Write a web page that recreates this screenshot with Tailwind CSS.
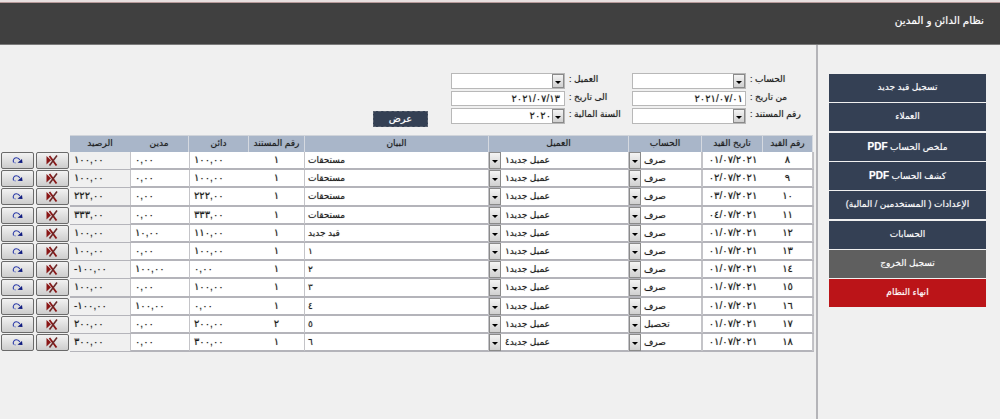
<!DOCTYPE html>
<html lang="ar">
<head>
  <meta charset="UTF-8">
  <title>نظام الدائن و المدين</title>
  <script src="https://cdn.jsdelivr.net/npm/@tailwindcss/browser@4"></script>
</head>
<body class="bg-[#f0f0f0] font-['Liberation_Sans','DejaVu_Sans',sans-serif] text-[9px] text-[#1a1a1a] [text-shadow:0_0_1px_rgba(0,0,0,0.4)]">
  <div class="h-[419px] w-[1000px] overflow-hidden flex flex-col">

    <!-- Header -->
    <div class="h-[3px] bg-[#e8e0e0] border-b border-[#b79a9a]"></div>
    <div class="h-[42px] bg-[#404040] border-b border-[#7a7a7a] flex justify-end pt-[10px] pr-[16px]">
      <span dir="rtl" class="text-white text-[10.5px] leading-[14px] [text-shadow:0_0_1px_rgba(255,255,255,0.5)]">نظام الدائن و المدين</span>
    </div>

    <div class="flex flex-1">
      <!-- Main -->
      <div class="w-[818px] border-r-2 border-[#b4b4b8] shrink-0">

        <!-- Filters -->
        <div class="mt-[28px] grid grid-cols-[373px_55px_23px_114px_67px_114px_70px] grid-rows-[17.5px_17.5px_17.5px] items-start">
          <div></div><div></div><div></div>
          <div class="h-[16px] bg-white border border-[#b8b8b8] flex"><span class="flex-1"></span><span class="select-btn"></span></div>
          <label dir="rtl" class="text-left pl-[4px] leading-[12px]">العميل :</label>
          <div class="h-[16px] bg-white border border-[#b8b8b8] flex"><span class="flex-1"></span><span class="select-btn"></span></div>
          <label dir="rtl" class="text-left pl-[4px] leading-[12px]">الحساب :</label>

          <div></div><div></div><div></div>
          <div dir="ltr" class="h-[15px] bg-white border border-[#b8b8b8] text-right text-[10px] pr-[4px] leading-[13px] tracking-[0.6px]">٢٠٢١/٠٧/١٣</div>
          <label dir="rtl" class="text-left pl-[4px] leading-[12px]">الى تاريخ :</label>
          <div dir="ltr" class="h-[15px] bg-white border border-[#b8b8b8] text-right text-[10px] pr-[2px] leading-[13px] tracking-[0.6px]">٢٠٢١/٠٧/٠١</div>
          <label dir="rtl" class="text-left pl-[4px] leading-[12px]">من تاريخ :</label>

          <div></div>
          <button class="h-[16px] mt-[2.5px] bg-[#344054] border border-dashed border-[#5a6270] text-white text-[10px] leading-[13px] [text-shadow:0_0_1px_rgba(255,255,255,0.5)]">عرض</button>
          <div></div>
          <div class="h-[16px] bg-white border border-[#b8b8b8] flex"><span class="flex-1 text-right text-[10px] pr-[1px] leading-[14px] tracking-[0.6px]">٢٠٢٠</span><span class="select-btn"></span></div>
          <label dir="rtl" class="text-left pl-[4px] leading-[12px]">السنة المالية :</label>
          <div class="h-[16px] bg-white border border-[#b8b8b8] flex"><span class="flex-1"></span><span class="select-btn"></span></div>
          <label dir="rtl" class="text-left pl-[4px] leading-[12px]">رقم المستند :</label>
        </div>

        <!-- Table -->
        <div class="mt-[9.5px] w-[813px]">
          <div dir="rtl" class="grid grid-cols-[50px_61px_73px_140px_184px_56px_60px_59px_60px] h-[17px] ml-[70px] bg-[#a9b6c9] border-t border-[#d0d4da] text-center leading-[15px] divide-x divide-x-reverse divide-[#d5d9e0]">
            <div>رقم القيد</div>
            <div>تاريخ القيد</div>
            <div>الحساب</div>
            <div>العميل</div>
            <div>البيان</div>
            <div>رقم المستند</div>
            <div>دائن</div>
            <div>مدين</div>
            <div>الرصيد</div>
          </div>
          <div id="rows"></div>
        </div>
      </div>

      <!-- Sidebar -->
      <div class="pl-[11px] pt-[29px] flex flex-col gap-[1.33px] text-white text-center leading-[27px] [text-shadow:0_0_1px_rgba(255,255,255,0.5)]" dir="rtl">
        <a class="block w-[157px] h-[28px] bg-[#344054]">تسجيل قيد جديد</a>
        <a class="block w-[157px] h-[28px] bg-[#344054]">العملاء</a>
        <a class="block w-[157px] h-[28px] bg-[#344054]">ملخص الحساب <span class="font-bold text-[10px]">PDF</span></a>
        <a class="block w-[157px] h-[28px] bg-[#344054]">كشف الحساب <span class="font-bold text-[10px]">PDF</span></a>
        <a class="block w-[157px] h-[28px] bg-[#344054]">الإعدادات ( المستخدمين / المالية)</a>
        <a class="block w-[157px] h-[28px] bg-[#344054]">الحسابات</a>
        <a class="block w-[157px] h-[28px] bg-[#5f5f5f]">تسجيل الخروج</a>
        <a class="block w-[157px] h-[28px] bg-[#bb1418]">انهاء النظام</a>
      </div>
    </div>
  </div>

  <script>
    const selectBtn = `<span class="w-[12px] shrink-0 border border-[#8a8a8a] bg-gradient-to-b from-[#f4f4f4] to-[#d0d0d0] flex items-center justify-center"><span class="w-0 h-0 mt-[2px] border-x-[3px] border-x-transparent border-t-[3px] border-t-black"></span></span>`;

    // Quickly fill the filter dropdown buttons
    document.querySelectorAll(".select-btn").forEach(el => { el.outerHTML = selectBtn; });

    const rows = [
      ["٨", "٠١/٠٧/٢٠٢١", "صرف", "عميل جديد١", "مستحقات", "١", "١٠٠,٠٠", "٠,٠٠", "١٠٠,٠٠"],
      ["٩", "٠٢/٠٧/٢٠٢١", "صرف", "عميل جديد١", "مستحقات", "١", "١٠٠,٠٠", "٠,٠٠", "١٠٠,٠٠"],
      ["١٠", "٠٣/٠٧/٢٠٢١", "صرف", "عميل جديد١", "مستحقات", "١", "٢٢٢,٠٠", "٠,٠٠", "٢٢٢,٠٠"],
      ["١١", "٠٤/٠٧/٢٠٢١", "صرف", "عميل جديد١", "مستحقات", "١", "٣٣٣,٠٠", "٠,٠٠", "٣٣٣,٠٠"],
      ["١٢", "٠١/٠٧/٢٠٢١", "صرف", "عميل جديد١", "قيد جديد", "١", "١١٠,٠٠", "١٠,٠٠", "١٠٠,٠٠"],
      ["١٣", "٠١/٠٧/٢٠٢١", "صرف", "عميل جديد١", "١", "١", "١٠٠,٠٠", "٠,٠٠", "١٠٠,٠٠"],
      ["١٤", "٠١/٠٧/٢٠٢١", "صرف", "عميل جديد١", "٢", "١", "٠,٠٠", "١٠٠,٠٠", "-١٠٠,٠٠"],
      ["١٥", "٠١/٠٧/٢٠٢١", "صرف", "عميل جديد١", "٣", "١", "١٠٠,٠٠", "٠,٠٠", "١٠٠,٠٠"],
      ["١٦", "٠١/٠٧/٢٠٢١", "صرف", "عميل جديد١", "٤", "١", "٠,٠٠", "١٠٠,٠٠", "-١٠٠,٠٠"],
      ["١٧", "٠١/٠٧/٢٠٢١", "تحصيل", "عميل جديد١", "٥", "٢", "٢٠٠,٠٠", "٠,٠٠", "٢٠٠,٠٠"],
      ["١٨", "٠١/٠٧/٢٠٢١", "صرف", "عميل جديد٤", "٦", "١", "٣٠٠,٠٠", "٠,٠٠", "٣٠٠,٠٠"],
    ];

    const redoIcon = `<svg width="11" height="7" viewBox="0 0 11 7" fill="none"><path d="M1.5 5.5 C0.5 2.5 2.5 0.8 4.5 0.8 C6 0.8 7.2 1.5 7.8 3" stroke="#2a3aa8" stroke-width="1.1"/><path d="M5.5 5.8 L10.5 6 L10 2 Z" fill="#101c80"/><path d="M1.5 5.5 L4 6" stroke="#7a86c9" stroke-width="0.9"/></svg>`;
    const deleteIcon = `<svg width="12" height="11" viewBox="0 0 12 11" fill="none"><path d="M0.5 1 L5 5.2 L0.5 9.5 Z" fill="#8a1616"/><path d="M3.5 1 L10.5 10.5" stroke="#8a1616" stroke-width="1.8"/><path d="M11 0.5 L3.5 10.5" stroke="#6a2a2a" stroke-width="1.6"/></svg>`;
    const actionBtn = icon => `<button class="w-[34px] h-[17px] mr-[1.5px] rounded-[2px] border border-[#6a6a6a] bg-gradient-to-b from-[#f2f2f2] to-[#cdcdcd] flex items-center justify-center">${icon}</button>`;

    document.getElementById("rows").innerHTML = rows.map(r => `
      <div class="flex h-[18.2px]">
        <div class="w-[70px] pl-[1px] flex items-start shrink-0">${actionBtn(redoIcon)}${actionBtn(deleteIcon)}</div>
        <div dir="rtl" class="flex-1 grid grid-cols-[50px_61px_73px_140px_184px_56px_60px_59px_60px] bg-white border-b-2 border-[#b4b4ba] border-r border-r-[#c0c0c4] leading-[15px] divide-x divide-x-reverse divide-[#c4c4c8]">
          <div class="text-center text-[10px] tracking-[0.6px]">${r[0]}</div>
          <div dir="ltr" class="text-center text-[10px] tracking-[0.8px]">${r[1]}</div>
          <div class="flex">
            <span class="flex-1 text-left pl-[3px] leading-[17px]">${r[2]}</span>
            ${selectBtn}
          </div>
          <div class="flex">
            <span class="flex-1 text-left pl-[4px] leading-[17px]">${r[3]}</span>
            ${selectBtn}
          </div>
          <div class="text-left pl-[3px] leading-[17px]">${r[4]}</div>
          <div class="text-center text-[10px]">${r[5]}</div>
          <div dir="ltr" class="text-left pl-[4px] text-[10px] tracking-[0.8px]">${r[6]}</div>
          <div dir="ltr" class="text-left pl-[4px] text-[10px] tracking-[0.8px]">${r[7]}</div>
          <div dir="ltr" class="text-left pl-[4px] text-[10px] tracking-[0.8px] bg-[#f0f0f0]">${r[8]}</div>
        </div>
      </div>`).join("");
  </script>
</body>
</html>
